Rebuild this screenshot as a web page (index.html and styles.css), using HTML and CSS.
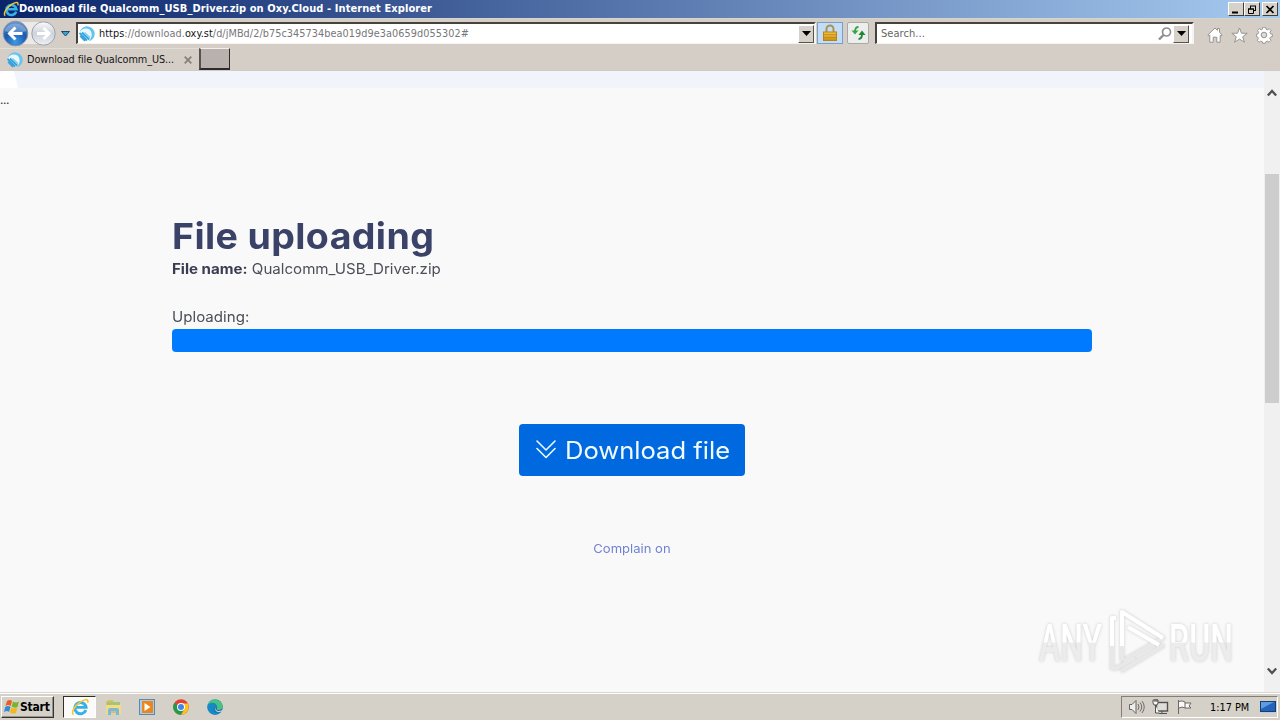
FILE: index.html
```html
<!DOCTYPE html>
<html lang="en">
<head>
<meta charset="utf-8">
<title>Download file Qualcomm_USB_Driver.zip on Oxy.Cloud</title>
<link rel="stylesheet" href="styles.css">
</head>
<body>
<svg class="defs" width="0" height="0">
  <defs>
    <radialGradient id="backBlue" cx="50%" cy="85%" r="85%"><stop offset="0" stop-color="#3b9be8"/><stop offset=".55" stop-color="#1c58ac"/><stop offset="1" stop-color="#6d9bd2"/></radialGradient>
    <linearGradient id="fwdGray" x2="0" y2="1"><stop offset="0" stop-color="#fafbfc"/><stop offset=".5" stop-color="#cdd3db"/><stop offset="1" stop-color="#eef1f4"/></linearGradient>
    <linearGradient id="gold" x2="0" y2="1"><stop offset="0" stop-color="#f3c63a"/><stop offset="1" stop-color="#cd8d10"/></linearGradient>
    <linearGradient id="edgeFill" x2="1" y2="1"><stop offset="0" stop-color="#2fa8d8"/><stop offset="1" stop-color="#0c59a4"/></linearGradient>
    <symbol id="ie" viewBox="0 0 16 16">
      <path d="M13.2 10.6A5 5 0 1 1 13.4 8.3H4.2" fill="none" stroke="#35b0e8" stroke-width="2.6"/>
      <path d="M2.2 14.8C-.2 12.6 3.5 6.8 8 3.8c3.5-2.4 6.6-3.1 7-1.4.2.6 0 1.3-.4 2" fill="none" stroke="#f2c632" stroke-width="1.4"/>
    </symbol>
    <symbol id="oxy" viewBox="0 0 16 16">
      <path d="M.8 5.800A7.600 7.600 0 1 1 10 15.300Q14 10 11.500 6Q8 2 4 5Z" fill="#66c5ef"/>
      <path d="M1 6Q3 2 7.500 2.500Q12 3 12.500 7.500Q13 11 10 14Z" fill="#eaf7fd"/>
      <path d="M.5 7L8 14.500M1.200 9.800l4.800 5M3 6.500l7.300 7" stroke="#35a3dd" stroke-width="1.800"/>
      <path d="M5.500 6.500l5.500 5" stroke="#7ecbee" stroke-width="1.200"/>
    </symbol>
  </defs>
</svg>
<div class="window">
  <header class="titlebar">
    <svg class="title-icon" width="16" height="16"><use href="#ie"/></svg>
    <span class="title-text">Download file Qualcomm_USB_Driver.zip on Oxy.Cloud - Internet Explorer</span>
    <div class="window-buttons">
      <span class="win-btn"><svg width="10" height="9"><path d="M1 7.500h6" stroke="#000" stroke-width="2"/></svg></span>
      <span class="win-btn restore"><svg width="10" height="9"><path d="M3 1h6M3.500 1v3M8.500 1v5M6 5.500h3M1 4h6" stroke="#000" fill="none"/><path d="M1.500 4v4.500h5V4M1 4h6" stroke="#000" fill="none"/></svg></span>
      <span class="win-btn"><svg width="10" height="9"><path d="M1.500 1l7 7M8.500 1l-7 7" stroke="#000" stroke-width="1.700"/></svg></span>
    </div>
  </header>

  <nav class="toolbar">
    <svg class="nav-buttons" width="58" height="29" viewBox="0 0 58 29">
      <rect x="15" y="3" width="28" height="22" fill="#eceae7"/>
      <circle cx="14.500" cy="14.500" r="12.300" fill="url(#backBlue)" stroke="#8793a5"/>
      <path d="M3.500 12a11.500 10.500 0 0 1 22 0q-11 4-22 0" fill="#b6d3f3" opacity=".42"/>
      <path d="M21.500 14.500h-13m6-6l-6 6 6 6" fill="none" stroke="#fff" stroke-width="3"/>
      <circle cx="42.500" cy="14.500" r="11.700" fill="url(#fwdGray)" stroke="#9ca1aa"/>
      <path d="M36 14.500h12M42.500 9l5.500 5.500-5.500 5.500" fill="none" stroke="#fff" stroke-width="3"/>
    </svg>
    <svg class="history" width="9" height="6"><path d="M.5.500h8L4.500 5Z" fill="#35a6cf" stroke="#164b74"/></svg>
    <div class="address">
      <svg class="site-icon" width="16" height="16"><use href="#oxy"/></svg>
      <span class="url"><b>https</b>://download.<b>oxy.st</b>/d/jMBd/2/b75c345734bea019d9e3a0659d055302#</span>
      <span class="drop"><svg width="9" height="5"><path d="M0 0h9L4.500 5Z"/></svg></span>
    </div>
    <span class="lock"><svg width="14" height="18"><path d="M3.500 9V5a3.500 3.500 0 0 1 7 0v4" fill="none" stroke="#a99354" stroke-width="2"/><rect x=".5" y="8" width="13" height="8.500" fill="url(#gold)" stroke="#b98218"/><path d="M1 10.500h12M1 13.500h12" stroke="#b6811c" opacity=".6"/></svg></span>
    <span class="refresh"><svg width="15" height="14"><path d="M7.500 1Q4 1 4 6" fill="none" stroke="#35a544" stroke-width="1.800"/><path d="M.5 4.500h7L4 8.500Z" fill="#35a544"/><path d="M7.500 13Q11 13 11 8" fill="none" stroke="#218532" stroke-width="1.800"/><path d="M7.500 9h7L11 4.500Z" fill="#218532"/></svg></span>
    <div class="search">
      <span class="search-text">Search...</span>
      <svg class="magnifier" width="14" height="14"><circle cx="8.500" cy="5" r="4" fill="#fff" stroke="#8e8e8e" stroke-width="1.700"/><path d="M5.500 8L1 12.500" stroke="#8e8e8e" stroke-width="2.400"/></svg>
      <span class="drop"><svg width="9" height="5"><path d="M0 0h9L4.500 5Z"/></svg></span>
    </div>
    <div class="commands">
      <svg width="16" height="16"><path d="M.8 8L8 1l2.500 2.400V1.500h2v3.900L15.200 8l-1 1-1-.8v7H9.800v-5H6.200v5H2.800v-7l-1 .8Z" fill="#fff" stroke="#96938f"/></svg>
      <svg width="17" height="16"><path d="M8.500 1l2 5.200 5.700.1-4.500 3.500 1.700 5.400-4.900-3.100-4.900 3.100 1.700-5.400L.8 6.300l5.700-.1Z" fill="#fff" stroke="#96938f"/></svg>
      <svg width="17" height="17"><g fill="#fff" stroke="#96938f"><path d="M7 1h3l.4 2 1.600.7 1.700-1.200 2 2-1.200 1.800.6 1.500 1.900.4v2.600l-1.900.4-.7 1.700 1.200 1.700-2 2-1.700-1.200-1.600.7-.4 1.600H7l-.4-1.600-1.600-.7-1.700 1.200-2-2 1.200-1.700-.7-1.700L.5 10.800V8.200l1.600-.4.7-1.600-1.200-1.700 2-2 1.700 1.200L6.600 3Z" transform="translate(0 -.7) scale(.96)"/><circle cx="8" cy="8" r="2.800" fill="#ddd9d5"/></g></svg>
    </div>
  </nav>

  <div class="tabs">
    <div class="tab">
      <svg width="16" height="16"><use href="#oxy"/></svg>
      <span class="tab-text">Download file Qualcomm_US...</span>
      <svg class="tab-close" width="8" height="8"><path d="M.7.700l6.600 6.600M7.300.700L.7 7.300" stroke="#85817c" stroke-width="1.800"/></svg>
    </div>
    <div class="new-tab"></div>
  </div>

  <div class="viewport">
    <main class="page">
      <div class="strip"><span class="strip-corner"></span></div>
      <p class="ellipsis">...</p>
      <section class="content">
        <h1><span class="heading-text">File uploading</span></h1>
        <p class="file"><b>File name:</b> <span class="file-name">Qualcomm_USB_Driver.zip</span></p>
        <p class="uploading">Uploading:</p>
        <div class="progress"></div>
        <div class="action">
          <a class="download"><svg width="20" height="20"><path d="M1 1l9 9 9-9M1 8.500l9 9 9-9" fill="none" stroke="#e9fbff" stroke-width="1.600" stroke-linecap="round" stroke-linejoin="round"/></svg><span class="download-text">Download file</span></a>
        </div>
        <div class="complain">Complain on</div>
      </section>
      <svg class="watermark" width="220" height="80" viewBox="0 0 220 80">
        <defs><linearGradient id="markFill" gradientUnits="userSpaceOnUse" x1="0" y1="19" x2="0" y2="56"><stop offset=".48" stop-color="#fff"/><stop offset=".52" stop-color="#ececec"/></linearGradient></defs>
        <g class="mark-shadow">
          <text x="10" y="56" textLength="63" lengthAdjust="spacingAndGlyphs">ANY</text>
          <text x="140" y="56" textLength="64" lengthAdjust="spacingAndGlyphs">RUN</text>
          <g fill="none" stroke-width="4" stroke-linejoin="round">
            <path d="M87 13h-4v50h5l18-10" stroke="#e8e8e8"/>
            <path d="M87 13h-4v28" stroke="#fff"/>
            <path d="M93 56V7l41 26-40 23M92 66l43-26" stroke="#e8e8e8"/>
            <path d="M93 41V7l41 26M99 22l31 18" stroke="#fff"/>
          </g>
        </g>
      </svg>
    </main>
    <aside class="scrollbar">
      <svg class="arrow-up" width="10" height="8"><path d="M.8 6.500L5 2l4.200 4.500" fill="none" stroke="#505050" stroke-width="2.300"/></svg>
      <div class="thumb"></div>
      <svg class="arrow-down" width="10" height="8"><path d="M.8 1.500L5 6l4.200-4.500" fill="none" stroke="#505050" stroke-width="2.300"/></svg>
    </aside>
  </div>

  <footer class="taskbar">
    <div class="start">
      <svg width="16" height="16"><path d="M3 2q3-2 5 0L6.700 7Q4 5 1.500 7Z" fill="#ef5b24"/><path d="M9 2.500q3 2 6 0L13.500 8q-3 1.500-5.800-.5Z" fill="#77b629"/><path d="M1.200 8q3-2 5.300 0L5 13Q3 11 0 13Z" fill="#3389d4"/><path d="M7.300 8.500q3 2 6 0L12 14q-3 1.500-6-.5Z" fill="#f4b719"/></svg>
      <span class="start-text">Start</span>
    </div>
    <div class="apps">
      <div class="app active"><svg width="18" height="18"><use href="#ie"/></svg></div>
      <div class="app"><svg width="17" height="17"><path d="M1 3l2-2h5l1 2h6v11H1Z" fill="#e0bd5d"/><path d="M2 3h13v3H2Z" fill="#a4c37b"/><path d="M1 6h15v9h-4v-3H5v3H1Z" fill="#f5dc83"/><path d="M3 16v-5q0-2 2-2h7q2 0 2 2v5h-3v-4H6v4Z" fill="#79bad8"/></svg></div>
      <div class="app"><svg width="16" height="16"><rect x=".5" y=".5" width="15" height="15" fill="#a7cde9" stroke="#5589b6"/><rect x="3" y="2" width="11" height="12" fill="#ef8518"/><path d="M5.500 4l6 4-6 4Z" fill="#fff"/></svg></div>
      <div class="app"><svg width="16" height="16"><circle cx="8" cy="8" r="7.800" fill="#e34133"/><path d="M8 8L1.300 4A7.800 7.800 0 0 0 8 15.800L11.500 10Z" fill="#249b4b"/><path d="M8 15.800A7.800 7.800 0 0 0 14.800 4.500H8l3.500 5.500Z" fill="#fbc51b"/><circle cx="8" cy="8" r="4" fill="#fff"/><circle cx="8" cy="8" r="3" fill="#4285e8"/></svg></div>
      <div class="app"><svg width="16" height="16"><circle cx="8" cy="8" r="7.800" fill="url(#edgeFill)"/><path d="M.5 6C3-1 14-1 15.700 7c.3 3-2 4-4 4-2 0-2-1-1.500-2 .8-2-1.200-4-3.200-4C4 4 1.500 5 .5 6Z" fill="#48c47c"/><path d="M.5 7C2 3 8 3 9.500 6c-3 0-5 3-3 6 2 2 5 2 8 0-4 6-14 4-14-5Z" fill="#168ac7"/><path d="M9.700 7.500c-2 2-.8 4.500 2 4.500 1.300 0 2.500-.3 3.400-.9l.7 1C10 15 6 11 9.700 7.500Z" fill="#d6d2cc"/></svg></div>
    </div>
    <div class="tray">
      <svg class="speaker" width="18" height="16"><path d="M1.500 5.500H4L8 1.500v13l-4-4H1.500Z" fill="#eee" stroke="#69655f"/><path d="M10 5q2 3 0 6M12 3.500q3.500 4.500 0 9M14 2q4.500 6 0 12" fill="none" stroke="#716d68"/></svg>
      <svg class="network" width="17" height="16"><rect x="4.500" y="3.500" width="11" height="8.500" fill="#dededb" stroke="#55514c" stroke-width="1.400"/><path d="M7 14.500h8M10 12v2M1 4V1h5v3l-1 2H2Z M3 0v3M5 0v3M3.500 6v8H7" stroke="#55514c" fill="#f7f7f7"/></svg>
      <svg class="flag" width="17" height="16"><path d="M2.500 1v14M3 2.500q3-1.500 6 .5v6q-3-2-6 0M9 4h6l-2 3 2 2H9" fill="#fafafa" stroke="#6c6862"/></svg>
      <span class="clock">1:17 PM</span>
      <svg class="desktop" width="16" height="13"><rect x=".5" y=".5" width="15" height="10" fill="#2264bd" stroke="#163e72"/><path d="M1 8L14 1H1Z" fill="#5e9ce1"/><path d="M1 11.500h14" stroke="#b8cbdc"/></svg>
    </div>
  </footer>
</div>
</body>
</html>
```
FILE: styles.css
```css
* { box-sizing: border-box; }
body { margin: 0; }
.defs { position: absolute; }
.window { width: 1280px; height: 720px; display: flex; flex-direction: column; overflow: hidden; background: #d5d0c8; font: 10.800px "DejaVu Sans Condensed", "DejaVu Sans", sans-serif; font-stretch: condensed; white-space: nowrap; }
svg { display: block; flex: none; }
p, h1 { margin: 0; }
.titlebar { height: 18px; flex: none; display: flex; align-items: center; padding: 0 2px 0 3px; background: linear-gradient(90deg, #0a246a, #a6caf0); }
.title-text { color: #fff; font-weight: bold; font-size: 11px; letter-spacing: .08px; line-height: 18px; }
.window-buttons { display: flex; margin-left: auto; }
.win-btn { width: 16px; height: 14px; background: #d6d2ca; border: 1px solid; border-color: #fff #404040 #404040 #fff; display: flex; align-items: center; justify-content: center; }
.restore { margin-right: 2px; }
.toolbar { height: 30px; flex: none; display: flex; align-items: flex-start; background: #d5cec7; border-top: 1px solid #d4d6cb; }
.nav-buttons { margin-left: 1px; }
.history { margin: 12px 0 0 2px; }
.address, .search { display: flex; align-items: center; height: 22px; margin-top: 3px; background: #fff; border: 2px solid; border-color: #48423f #f6f3f0 #f6f3f0 #48423f; border-bottom-width: 1px; }
.address { width: 740px; margin-left: 6px; }
.site-icon { margin-left: 1px; }
.url { margin-left: 4px; color: #77777b; letter-spacing: .06px; }
.url b { color: #151515; font-weight: normal; }
.drop { width: 16px; height: 18px; background: #d6d1c9; border: 1px solid; border-color: #fff #56524c #56524c #fff; display: flex; align-items: center; justify-content: center; }
.address .drop { margin-left: auto; }
.lock, .refresh { height: 22px; display: flex; align-items: center; justify-content: center; margin-top: 3px; }
.lock { width: 26px; margin-left: 1px; background: #c4ddf7; border: 1px solid #789fc9; }
.refresh { width: 22px; margin-left: 4px; background: #eceeed; border: 1px solid #aaa9a4; border-radius: 2px; }
.search { width: 319px; margin-left: 6px; }
.search-text { margin-left: 4px; color: #666; font-size: 11px; letter-spacing: .05px; }
.magnifier { margin: 0 1px 0 auto; }
.search .drop { margin-right: 3px; }
.commands { display: flex; gap: 8px; margin: 8px 0 0 13px; }
.tabs { height: 23px; flex: none; display: flex; background: #d5cec7; border-bottom: 1px solid #cfccc5; }
.tab { width: 199px; display: flex; align-items: center; padding-left: 7px; border-top: 1px solid #e1ddd7; }
.tab-text { margin-left: 4px; width: 148px; color: #141414; letter-spacing: -.08px; }
.tab-close { margin-left: 9px; }
.new-tab { width: 31px; height: 22px; border: 1px solid; border-color: #f2efeb #2d2a27 #2d2a27 #55514d; border-width: 1px 1px 2px 2px; background: #b9b1ad; }
.viewport { height: 621px; flex: none; display: flex; background: #f9f9f9; }
.page { position: relative; width: 1264px; color: #4c4f58; font-family: Inter, sans-serif; font-stretch: normal; }
.strip { height: 17px; background: #f1f4fb; }
.strip-corner { display: block; width: 18px; height: 17px; background: #fff; clip-path: polygon(0 0, 14px 0, 18px 17px, 0 17px); }
.ellipsis { height: 24px; font-size: 12px; line-height: 23px; letter-spacing: -.5px; color: #333; }
.content { width: 920px; margin: 100px auto 0 172px; }
h1 { height: 48px; line-height: 50px; font-size: 35.500px; color: #3a4268; font-weight: 700; letter-spacing: .35px; }
.heading-text { display: inline-block; transform: scaleX(1.058); transform-origin: left; }
.file { height: 20px; line-height: 20px; font-size: 14.200px; margin-top: -1px; transform: scaleX(1.064); transform-origin: left; }
.file b { color: #383d51; font-weight: 700; }
.uploading { height: 22px; line-height: 22px; margin-top: 27px; font-size: 14.200px; transform: scaleX(1.064); transform-origin: left; }
.progress { height: 23px; background: #007bff; border-radius: 4px; margin-top: 1px; }
.action { display: flex; justify-content: center; margin-top: 72px; }
.download { width: 226px; height: 52px; background: #0069df; border-radius: 4px; display: flex; align-items: center; padding-left: 17px; color: #effbff; }
.download-text { font-size: 24px; line-height: 30px; padding-top: 1px; margin-left: 9px; letter-spacing: 0; transform: scaleX(1.065); transform-origin: left; }
.complain { margin-top: 63px; text-align: center; font-size: 12.200px; line-height: 20px; color: #7182d5; transform: scaleX(1.07); }
.watermark { position: absolute; left: 1029px; top: 534px; }
.watermark text { font-family: Roboto, sans-serif; font-size: 52px; font-weight: 500; fill: url(#markFill); }
.mark-shadow { filter: drop-shadow(0 0 1.5px #cbcbcb); }
.scrollbar { width: 16px; background: #f0f0f0; display: flex; flex-direction: column; align-items: center; }
.arrow-up { margin-top: 18px; }
.thumb { width: 14px; height: 229px; background: #cdcdcd; margin-top: 77px; }
.arrow-down { margin: auto 0 17px; }
.taskbar { height: 28px; flex: none; display: flex; align-items: flex-start; padding: 3px 2px 0 1px; border-top: 1px solid #d9d7ce; background: #d5d0c8; box-shadow: inset 0 1px #fff; }
.start { width: 53px; height: 22px; display: flex; align-items: center; padding-left: 2px; border: 1px solid; border-color: #fff #35322f #35322f #fff; box-shadow: inset -1px -1px #96928c; }
.start-text { font-size: 12px; font-weight: bold; letter-spacing: -.2px; color: #000; }
.apps { display: flex; margin-left: 9px; }
.app { width: 34px; height: 22px; display: flex; align-items: center; justify-content: center; }
.active { border: 1px solid; border-color: #302e2b #fff #fff #302e2b; background: #fbfaf9; width: 33px; }
.tray { margin-left: auto; width: 157px; height: 22px; display: flex; align-items: center; border: 1px solid; border-color: #827e78 #fff #fff #827e78; }
.speaker { margin-left: 6px; }
.network { margin-left: 6px; }
.flag { margin-left: 7px; }
.clock { margin-left: 17px; width: 43px; color: #000; }
.desktop { margin-left: 7px; }
```
